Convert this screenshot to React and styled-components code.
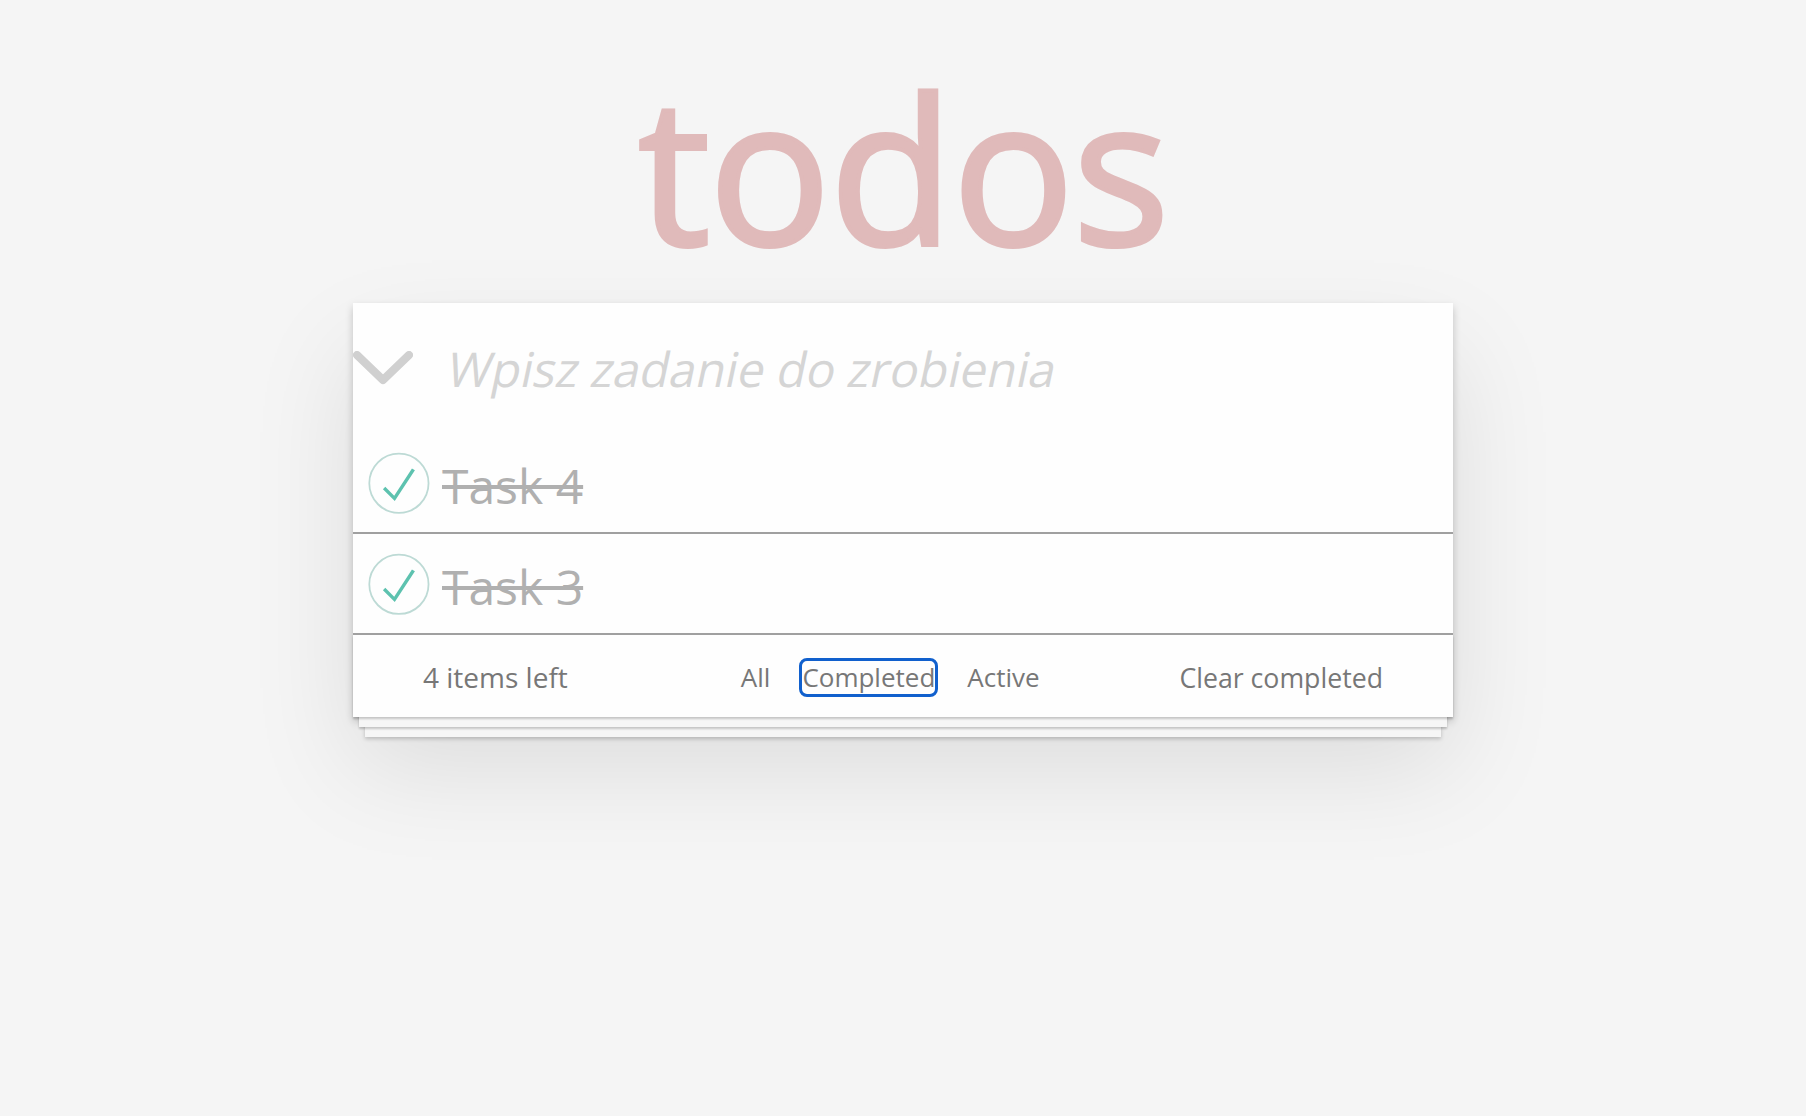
import React from 'react'
import styled, { createGlobalStyle } from 'styled-components'

const GlobalStyle = createGlobalStyle`
  html, body {
    margin: 0;
    padding: 0;
  }
  body {
    background: #f5f5f5;
    font-family: "Open Sans", "Liberation Sans", sans-serif;
    color: #4d4d4d;
    min-height: 100vh;
  }
`

const Page = styled.div`
  display: flex;
  flex-direction: column;
  align-items: center;
  padding-top: 62px;
`

const Title = styled.h1`
  margin: 0;
  font-size: 203px;
  line-height: 208px;
  font-weight: 400;
  letter-spacing: -1.5px;
  color: #e0baba;
  -webkit-text-stroke: 4px #e0baba;
  text-align: center;
`

const Card = styled.section`
  width: 1100px;
  margin-top: 33px;
  background: #fefefe;
  box-shadow: 0 4px 8px 0 rgba(0, 0, 0, 0.2), 0 50px 100px 0 rgba(0, 0, 0, 0.1);
`

const Header = styled.header`
  display: flex;
  align-items: center;
  height: 130px;
`

const ToggleAll = styled.svg`
  flex: none;
  width: 60px;
  height: 34px;
`

// placeholder is a slanted regular face, so the empty field is skewed about its baseline
const NewTodo = styled.input`
  flex: 1;
  min-width: 0;
  height: 100%;
  border: 0;
  outline: none;
  background: transparent;
  padding: 0 32px 0 32px;
  font: 400 48px "Open Sans", "Liberation Sans", sans-serif;
  color: #4d4d4d;
  transform: skewX(-12deg);
  transform-origin: 0 83px;

  &::placeholder {
    color: #d5d5d5;
  }
`

const List = styled.ul`
  margin: 0;
  padding: 0;
  list-style: none;
`

const Item = styled.li`
  display: flex;
  align-items: center;
  height: 99px;
  border-bottom: 2px solid #a0a0a0;
`

const Check = styled.svg`
  flex: none;
  width: 80px;
  height: 80px;
`

const Label = styled.label`
  padding: 5px 0 0 9px;
  font-size: 48px;
  color: ${p => (p.done ? '#b0b0b0' : '#4d4d4d')};
  text-decoration: ${p => (p.done ? 'line-through' : 'none')};
`

const Footer = styled.footer`
  position: relative;
  display: flex;
  align-items: center;
  height: 82px;
  padding: 2px 70px 0 70px;
  box-sizing: border-box;
  font-size: 28px;
  color: #777;

  &::before {
    content: '';
    position: absolute;
    inset: 0;
    box-shadow: 0 2px 2px rgba(0, 0, 0, 0.2),
      0 16px 0 -6px #f6f6f6,
      0 18px 2px -6px rgba(0, 0, 0, 0.2),
      0 32px 0 -12px #f6f6f6,
      0 34px 4px -12px rgba(0, 0, 0, 0.2);
    pointer-events: none;
  }
`

const Count = styled.span`
  position: relative;
`

const Filters = styled.ul`
  position: relative;
  display: flex;
  align-items: center;
  gap: 32px;
  margin: 0 0 0 173px;
  padding: 0;
  list-style: none;
  font-size: 26px;
`

const Filter = styled.a`
  display: inline-block;
  line-height: 33px;
  color: inherit;
  text-decoration: none;
  border-radius: 5px;
  outline: ${p => (p.focused ? '3px solid #1160cd' : 'none')};
`

const Clear = styled.button`
  position: relative;
  margin-left: auto;
  border: 0;
  padding: 0;
  background: none;
  font: inherit;
  font-size: 26.7px;
  color: inherit;
`

const todos = [
  { id: 4, title: 'Task 4', done: true },
  { id: 3, title: 'Task 3', done: true },
]

export default function App() {
  return (
    <>
      <GlobalStyle />
      <Page>
        <Title>todos</Title>
        <Card>
          <Header>
            <ToggleAll viewBox="0 0 60 34">
              <polyline
                points="4,4 30,29 56,4"
                fill="none"
                stroke="#d0d0d0"
                strokeWidth="8"
                strokeLinecap="round"
                strokeLinejoin="round"
              />
            </ToggleAll>
            <NewTodo placeholder="Wpisz zadanie do zrobienia" />
          </Header>
          <List>
            {todos.map(t => (
              <Item key={t.id}>
                <Check viewBox="-10 -18 100 135">
                  <circle cx="50" cy="50" r="50" fill="none" stroke="#bddad5" strokeWidth="3" />
                  {t.done && <path fill="#5dc2af" d="M72 25L42 71 27 56l-4 4 20 20 34-52z" />}
                </Check>
                <Label done={t.done}>{t.title}</Label>
              </Item>
            ))}
          </List>
          <Footer>
            <Count>4 items left</Count>
            <Filters>
              <li><Filter href="#/">All</Filter></li>
              <li><Filter href="#/completed" focused>Completed</Filter></li>
              <li><Filter href="#/active">Active</Filter></li>
            </Filters>
            <Clear>Clear completed</Clear>
          </Footer>
        </Card>
      </Page>
    </>
  )
}
